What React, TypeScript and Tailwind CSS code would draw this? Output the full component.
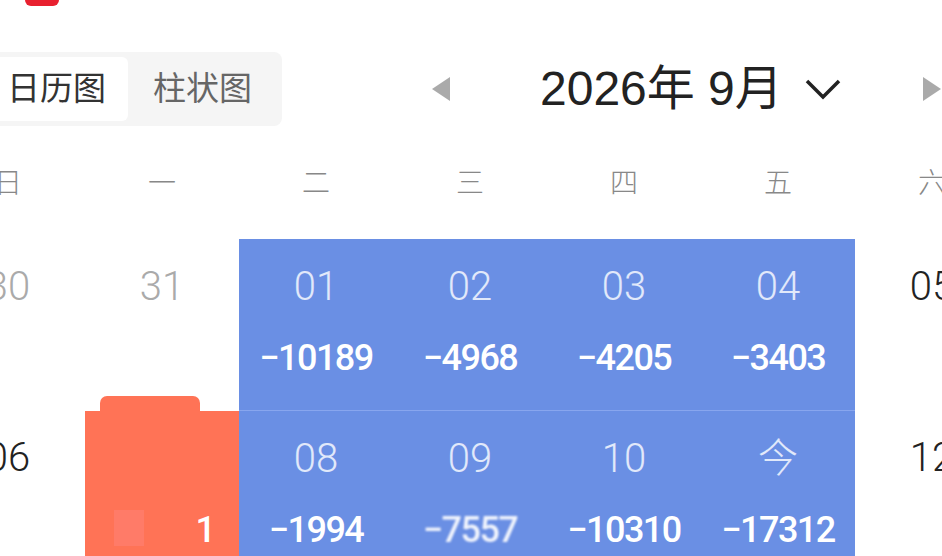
import React from 'react'

type Cell = {
  day: string
  value?: string
  kind: 'muted' | 'plain' | 'blue' | 'orange'
  blur?: boolean
  divider?: boolean
}

const weekdays = ['日', '一', '二', '三', '四', '五', '六']

const rows: Cell[][] = [
  [
    { day: '30', kind: 'muted' },
    { day: '31', kind: 'muted' },
    { day: '01', value: '−10189', kind: 'blue' },
    { day: '02', value: '−4968', kind: 'blue' },
    { day: '03', value: '−4205', kind: 'blue' },
    { day: '04', value: '−3403', kind: 'blue' },
    { day: '05', kind: 'plain' },
  ],
  [
    { day: '06', kind: 'plain' },
    { day: '', value: '1', kind: 'orange' },
    { day: '08', value: '−1994', kind: 'blue', divider: true },
    { day: '09', value: '−7557', kind: 'blue', blur: true, divider: true },
    { day: '10', value: '−10310', kind: 'blue', divider: true },
    { day: '今', value: '−17312', kind: 'blue', divider: true },
    { day: '12', kind: 'plain' },
  ],
]

function DayCell({ cell }: { cell: Cell }) {
  if (cell.kind === 'orange') {
    return (
      <div className="relative h-[171px] bg-[#ff7356] mt-[1px]">
        {/* Tab on top */}
        <div className="absolute -top-[15px] left-[15px] w-[100px] h-[16px] bg-[#ff7356] rounded-t-[7px]"></div>
        <div className="absolute left-[29px] top-[99px] w-[30px] h-[36px] bg-[#ff7b68]"></div>
        <div className="absolute right-[23px] top-[99px] text-[36px] leading-[40px] font-medium text-white font-['Roboto',sans-serif]">
          {cell.value}
        </div>
      </div>
    )
  }

  const dayColor =
    cell.kind === 'muted'
      ? 'text-[#aaaaaa]'
      : cell.kind === 'plain'
        ? 'text-[#222222]'
        : 'text-white/80'

  return (
    <div
      className={`h-[171px] flex flex-col items-center pt-[24px] ${
        cell.kind === 'blue' ? 'bg-[#6a8fe4]' : ''
      } ${cell.divider ? 'border-t border-[#88a6ee]' : ''}`}
    >
      <div className={`text-[40px] leading-[48px] font-light font-['Roboto','Noto_Sans_CJK_SC',sans-serif] ${dayColor}`}>
        {cell.day}
      </div>
      {cell.value && (
        <div
          className={`mt-[27px] text-[36px] leading-[40px] tracking-[-1.5px] font-medium text-white font-['Roboto',sans-serif] ${
            cell.blur ? 'blur-[1px] opacity-90' : ''
          }`}
        >
          {cell.value}
        </div>
      )}
    </div>
  )
}

export default function App() {
  return (
    <div className="w-[942px] h-[556px] overflow-hidden bg-white font-['Liberation_Sans','Noto_Sans_CJK_SC',sans-serif]">
      {/* Red tab indicator */}
      <div className="ml-[25px] w-[34px] h-[6px] bg-[#e8202f] rounded-b-md"></div>

      {/* Header */}
      <div className="mt-[46px] flex items-center h-[74px]">
        <div className="-ml-[20px] w-[302px] h-[74px] shrink-0 bg-[#f5f5f5] rounded-lg flex items-center p-[5px]">
          <div className="w-[143px] h-full bg-white rounded-md flex items-center justify-center text-[33px] text-[#333333]">
            日历图
          </div>
          <div className="flex-1 h-full flex items-center justify-center text-[33px] text-[#666666]">
            柱状图
          </div>
        </div>

        <svg className="ml-[150px] shrink-0" width="18" height="24" viewBox="0 0 18 24">
          <polygon points="18,0 18,24 0,12" fill="#aaaaaa" />
        </svg>

        <div className="ml-[90px] shrink-0 text-[48px] leading-none text-[#222222] whitespace-nowrap">
          2026年 9月
        </div>

        <svg className="ml-[22px] shrink-0" width="36" height="22" viewBox="0 0 36 22">
          <polyline points="2,3 18,19 34,3" fill="none" stroke="#222222" strokeWidth="3.5" />
        </svg>

        <svg className="ml-[82px] shrink-0" width="18" height="24" viewBox="0 0 18 24">
          <polygon points="0,0 18,12 0,24" fill="#aaaaaa" />
        </svg>
      </div>

      {/* Weekdays */}
      <div className="mt-[29px] -ml-[69px] grid grid-cols-[repeat(7,154px)] h-[58px] items-center">
        {weekdays.map((w) => (
          <div key={w} className="text-center text-[28px] text-[#888888] font-light">
            {w}
          </div>
        ))}
      </div>

      {/* Calendar grid */}
      <div className="mt-[26px] -ml-[69px] grid grid-cols-[repeat(7,154px)]">
        {rows.flat().map((cell, i) => (
          <DayCell key={i} cell={cell} />
        ))}
      </div>
    </div>
  )
}
